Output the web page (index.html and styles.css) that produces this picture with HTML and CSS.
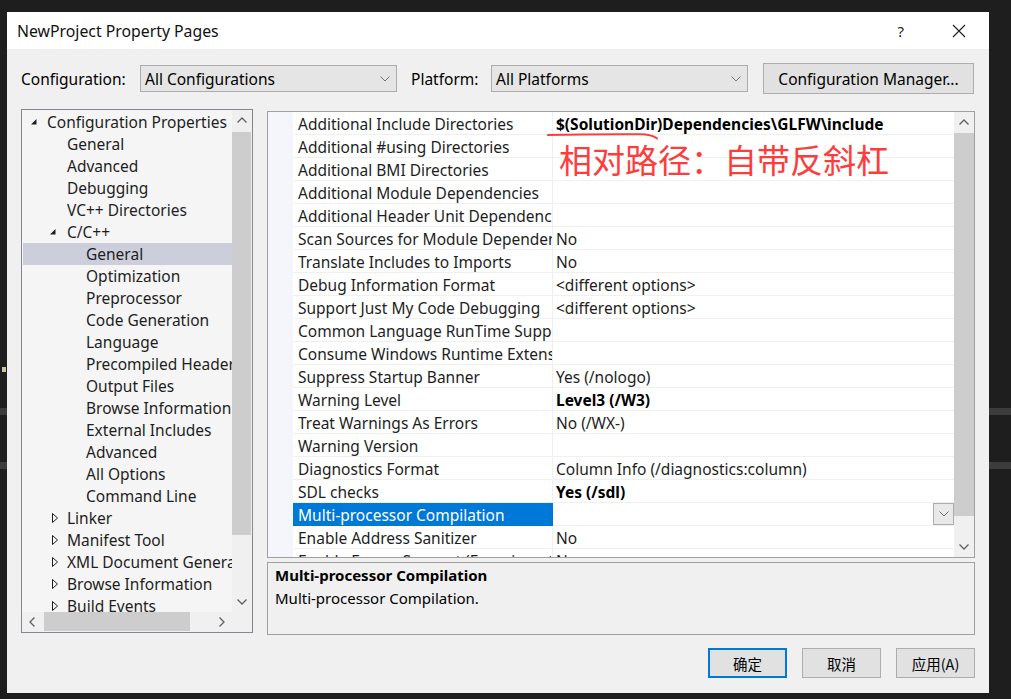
FILE: index.html
```html
<!DOCTYPE html>
<html>
<head>
<meta charset="utf-8">
<link rel="stylesheet" href="styles.css">
</head>
<body>
<div class="desk-bar bar-a"></div>
<div class="desk-bar bar-b"></div>
<div class="desk-dot"></div>

<div class="dialog">
  <div class="titlebar">
    <span class="title">NewProject Property Pages</span>
    <span class="help">?</span>
    <svg class="close" width="14" height="14" viewBox="0 0 14 14"><path d="M1 1 L13 13 M13 1 L1 13" stroke="#1e1e1e" stroke-width="1.1" fill="none"/></svg>
  </div>

  <div class="dlg-body">
    <div class="config-row">
      <span class="lbl">Configuration:</span>
      <div class="combo"><span>All Configurations</span><svg class="chev" width="10" height="6" viewBox="0 0 10 6"><path d="M0.5 0.5 L5 5 L9.5 0.5" stroke="#707070" fill="none"/></svg></div>
      <span class="lbl plat">Platform:</span>
      <div class="combo"><span>All Platforms</span><svg class="chev" width="10" height="6" viewBox="0 0 10 6"><path d="M0.5 0.5 L5 5 L9.5 0.5" stroke="#707070" fill="none"/></svg></div>
      <span class="spacer"></span>
      <div class="btn cfg-btn">Configuration Manager...</div>
    </div>

    <div class="main">
      <div class="tree-box">
        <div class="tree-content">
          <div class="t-row lv0"><svg class="tw-exp" width="6" height="6" viewBox="0 0 6 6"><polygon points="5.5,0 5.5,5.5 0,5.5" fill="#1e1e1e"/></svg><span>Configuration Properties</span></div>
          <div class="t-row lv1">General</div>
          <div class="t-row lv1">Advanced</div>
          <div class="t-row lv1">Debugging</div>
          <div class="t-row lv1">VC++ Directories</div>
          <div class="t-row lv1x"><svg class="tw-exp2" width="6" height="6" viewBox="0 0 6 6"><polygon points="5.5,0 5.5,5.5 0,5.5" fill="#1e1e1e"/></svg><span>C/C++</span></div>
          <div class="t-row lv2 sel">General</div>
          <div class="t-row lv2">Optimization</div>
          <div class="t-row lv2">Preprocessor</div>
          <div class="t-row lv2">Code Generation</div>
          <div class="t-row lv2">Language</div>
          <div class="t-row lv2">Precompiled Headers</div>
          <div class="t-row lv2">Output Files</div>
          <div class="t-row lv2">Browse Information</div>
          <div class="t-row lv2">External Includes</div>
          <div class="t-row lv2">Advanced</div>
          <div class="t-row lv2">All Options</div>
          <div class="t-row lv2">Command Line</div>
          <div class="t-row lv1c"><svg class="tw-col" width="6" height="10" viewBox="0 0 6 10"><polygon points="0.5,0.5 5.5,5 0.5,9.5" fill="none" stroke="#1e1e1e"/></svg><span>Linker</span></div>
          <div class="t-row lv1c"><svg class="tw-col" width="6" height="10" viewBox="0 0 6 10"><polygon points="0.5,0.5 5.5,5 0.5,9.5" fill="none" stroke="#1e1e1e"/></svg><span>Manifest Tool</span></div>
          <div class="t-row lv1c"><svg class="tw-col" width="6" height="10" viewBox="0 0 6 10"><polygon points="0.5,0.5 5.5,5 0.5,9.5" fill="none" stroke="#1e1e1e"/></svg><span>XML Document Generator</span></div>
          <div class="t-row lv1c"><svg class="tw-col" width="6" height="10" viewBox="0 0 6 10"><polygon points="0.5,0.5 5.5,5 0.5,9.5" fill="none" stroke="#1e1e1e"/></svg><span>Browse Information</span></div>
          <div class="t-row lv1c"><svg class="tw-col" width="6" height="10" viewBox="0 0 6 10"><polygon points="0.5,0.5 5.5,5 0.5,9.5" fill="none" stroke="#1e1e1e"/></svg><span>Build Events</span></div>
        </div>
        <div class="vscroll tree-v">
          <div class="sb-arrow"><svg width="10" height="6" viewBox="0 0 10 6"><path d="M0.5 5.5 L5 1 L9.5 5.5" stroke="#606060" stroke-width="1.3" fill="none"/></svg></div>
          <div class="sb-track"><div class="thumb-v tree-thumb"></div></div>
          <div class="sb-arrow"><svg width="10" height="6" viewBox="0 0 10 6"><path d="M0.5 0.5 L5 5 L9.5 0.5" stroke="#606060" stroke-width="1.3" fill="none"/></svg></div>
        </div>
        <div class="hscroll">
          <div class="sb-arrow-h"><svg width="6" height="10" viewBox="0 0 6 10"><path d="M5.5 0.5 L1 5 L5.5 9.5" stroke="#606060" stroke-width="1.3" fill="none"/></svg></div>
          <div class="sb-track-h"><div class="thumb-h"></div></div>
          <div class="sb-arrow-h"><svg width="6" height="10" viewBox="0 0 6 10"><path d="M0.5 0.5 L5 5 L0.5 9.5" stroke="#606060" stroke-width="1.3" fill="none"/></svg></div>
        </div>
        <div class="corner"></div>
      </div>

      <div class="right-col">
        <div class="grid-box">
          <div class="grid-rows">
            <div class="g-row"><div class="gut"></div><div class="nm">Additional Include Directories</div><div class="vl b">$(SolutionDir)Dependencies\GLFW\include</div></div>
            <div class="g-row"><div class="gut"></div><div class="nm">Additional #using Directories</div><div class="vl"></div></div>
            <div class="g-row"><div class="gut"></div><div class="nm">Additional BMI Directories</div><div class="vl"></div></div>
            <div class="g-row"><div class="gut"></div><div class="nm">Additional Module Dependencies</div><div class="vl"></div></div>
            <div class="g-row"><div class="gut"></div><div class="nm">Additional Header Unit Dependencies</div><div class="vl"></div></div>
            <div class="g-row"><div class="gut"></div><div class="nm">Scan Sources for Module Dependencies</div><div class="vl">No</div></div>
            <div class="g-row"><div class="gut"></div><div class="nm">Translate Includes to Imports</div><div class="vl">No</div></div>
            <div class="g-row"><div class="gut"></div><div class="nm">Debug Information Format</div><div class="vl">&lt;different options&gt;</div></div>
            <div class="g-row"><div class="gut"></div><div class="nm">Support Just My Code Debugging</div><div class="vl">&lt;different options&gt;</div></div>
            <div class="g-row"><div class="gut"></div><div class="nm">Common Language RunTime Support</div><div class="vl"></div></div>
            <div class="g-row"><div class="gut"></div><div class="nm">Consume Windows Runtime Extension</div><div class="vl"></div></div>
            <div class="g-row"><div class="gut"></div><div class="nm">Suppress Startup Banner</div><div class="vl">Yes (/nologo)</div></div>
            <div class="g-row"><div class="gut"></div><div class="nm">Warning Level</div><div class="vl b">Level3 (/W3)</div></div>
            <div class="g-row"><div class="gut"></div><div class="nm">Treat Warnings As Errors</div><div class="vl">No (/WX-)</div></div>
            <div class="g-row"><div class="gut"></div><div class="nm">Warning Version</div><div class="vl"></div></div>
            <div class="g-row"><div class="gut"></div><div class="nm">Diagnostics Format</div><div class="vl">Column Info (/diagnostics:column)</div></div>
            <div class="g-row"><div class="gut"></div><div class="nm">SDL checks</div><div class="vl b">Yes (/sdl)</div></div>
            <div class="g-row selrow"><div class="gut"></div><div class="nm">Multi-processor Compilation</div><div class="vl"><div class="drop"><svg width="10" height="6" viewBox="0 0 10 6"><path d="M0.5 0.5 L5 5 L9.5 0.5" stroke="#707070" fill="none"/></svg></div></div></div>
            <div class="g-row"><div class="gut"></div><div class="nm">Enable Address Sanitizer</div><div class="vl">No</div></div>
            <div class="g-row"><div class="gut"></div><div class="nm">Enable Fuzzer Support (Experimental)</div><div class="vl">No</div></div>

            <svg class="scribble" width="116" height="10" viewBox="0 0 116 10"><path d="M2 4 Q40 3 94 3.2 Q106 3.4 111 7.5" stroke="#ff3c3c" stroke-width="2" fill="none" stroke-linecap="round"/></svg>
            <div class="annot">相对路径：自带反斜杠</div>
          </div>
          <div class="vscroll grid-v">
            <div class="sb-arrow"><svg width="10" height="6" viewBox="0 0 10 6"><path d="M0.5 5.5 L5 1 L9.5 5.5" stroke="#606060" stroke-width="1.3" fill="none"/></svg></div>
            <div class="sb-track"><div class="thumb-v grid-thumb"></div></div>
            <div class="sb-arrow"><svg width="10" height="6" viewBox="0 0 10 6"><path d="M0.5 0.5 L5 5 L9.5 0.5" stroke="#606060" stroke-width="1.3" fill="none"/></svg></div>
          </div>
        </div>
        <div class="desc-box">
          <div class="desc-title">Multi-processor Compilation</div>
          <div class="desc-text">Multi-processor Compilation.</div>
        </div>
      </div>
    </div>

    <div class="btn-row">
      <div class="btn dbtn default">确定</div>
      <div class="btn dbtn">取消</div>
      <div class="btn dbtn">应用(A)</div>
    </div>
  </div>
</div>
</body>
</html>
```

FILE: styles.css
```css
* { box-sizing: border-box; }

body {
  margin: 0;
  width: 1011px;
  height: 699px;
  padding: 12px 0 0 7px;
  background: #1e1e1e;
  position: relative;
  overflow: hidden;
  font-family: "Noto Sans", "Noto Sans CJK SC", sans-serif;
  font-size: 15.5px;
  color: #000;
}

.desk-bar {
  position: absolute;
  left: 0;
  width: 1011px;
  height: 7px;
  background: #3c3c3c;
}
.bar-a { top: 408px; }
.bar-b { top: 462px; }
.desk-dot {
  position: absolute;
  left: 2px;
  top: 367px;
  width: 4px;
  height: 5px;
  background: #c9c79a;
}

.dialog {
  position: relative;
  z-index: 1;
  width: 982px;
  height: 681px;
  background: #f0f0f0;
  display: flex;
  flex-direction: column;
}

.titlebar {
  height: 37px;
  background: #fff;
  display: flex;
  align-items: center;
  padding: 0 23px 0 10px;
  flex: none;
}
.title { font-size: 15.8px; flex: 1; color: #111; }
.help { font-size: 15px; margin-right: 48px; color: #222; }
.close { display: block; }

.dlg-body {
  flex: 1;
  padding: 14px 14px 0 14px;
  display: flex;
  flex-direction: column;
}

.config-row {
  height: 31px;
  display: flex;
  align-items: center;
}
.lbl { width: 119px; white-space: nowrap; }
.lbl.plat { width: 94px; padding-left: 14px; }
.combo {
  width: 257px;
  height: 27px;
  background: #e5e5e5;
  border: 1px solid #adadad;
  display: flex;
  align-items: center;
  padding: 0 6px 0 4px;
}
.combo span { flex: 1; }
.chev { display: block; }
.spacer { width: 15px; }

.btn {
  background: #e1e1e1;
  border: 1px solid #adadad;
  display: flex;
  align-items: center;
  justify-content: center;
}
.cfg-btn { width: 211px; height: 31px; }

.main {
  margin-top: 15px;
  display: flex;
  gap: 14px;
  height: 526px;
}

.tree-box {
  width: 232px;
  height: 524px;
  border: 1px solid #828790;
  display: grid;
  grid-template-columns: 210px 20px;
  grid-template-rows: 502px 20px;
  background: #f5f5f5;
}
.tree-content {
  overflow: hidden;
  padding-top: 1px;
  color: #1e1e1e;
}
.t-row {
  height: 22px;
  line-height: 22px;
  white-space: nowrap;
  display: flex;
  align-items: center;
}
.t-row svg { flex: none; display: block; }
.lv0 { padding-left: 9px; }
.lv0 .tw-exp { margin-right: 10px; }
.lv1 { padding-left: 45px; }
.lv1x { padding-left: 28px; }
.lv1x .tw-exp2 { margin-right: 11px; }
.lv1c { padding-left: 30px; }
.lv1c .tw-col { margin-right: 9px; }
.lv2 { padding-left: 64px; }
.t-row.sel { background: #cccedb; margin-left: 1px; padding-left: 63px; }

.vscroll {
  background: #f0f0f0;
  display: flex;
  flex-direction: column;
}
.sb-arrow {
  height: 20px;
  flex: none;
  display: flex;
  align-items: center;
  justify-content: center;
}
.sb-arrow svg { display: block; }
.sb-track { flex: 1; }
.thumb-v { width: 19px; background: #cdcdcd; }
.tree-thumb { margin-top: 2px; height: 403px; }

.hscroll {
  background: #f0f0f0;
  display: flex;
}
.sb-arrow-h {
  width: 20px;
  flex: none;
  display: flex;
  align-items: center;
  justify-content: center;
}
.sb-track-h { flex: 1; }
.thumb-h { margin-left: 2px; width: 146px; height: 19px; background: #cdcdcd; }
.corner { background: #f0f0f0; }

.right-col {
  width: 708px;
  padding-top: 2px;
  display: flex;
  flex-direction: column;
  gap: 4px;
}

.grid-box {
  height: 447px;
  border: 1px solid #a0a0a0;
  background: #fff;
  display: flex;
}
.grid-rows {
  flex: 1;
  position: relative;
  overflow: hidden;
}
.g-row {
  display: grid;
  grid-template-columns: 25px 260px 1fr;
  height: 23px;
}
.gut { background: #f4f6fb; }
.nm {
  border-right: 1px solid #f0f0f0;
  border-bottom: 1px solid #f0f0f0;
  padding-left: 5px;
  line-height: 24px;
  white-space: nowrap;
  overflow: hidden;
  color: #1e1e1e;
}
.vl {
  border-bottom: 1px solid #f0f0f0;
  padding-left: 3px;
  line-height: 24px;
  white-space: nowrap;
  overflow: hidden;
  display: flex;
  justify-content: space-between;
  color: #1e1e1e;
}
.vl.b { font-weight: 700; color: #000; }
.selrow .nm { background: #0078d7; color: #fff; border-color: #0078d7; }
.drop {
  margin-left: auto;
  width: 21px;
  height: 22px;
  border: 1px solid #adadad;
  background: #e9e9e9;
  display: flex;
  align-items: center;
  justify-content: center;
}
.grid-v { width: 20px; flex: none; }
.grid-thumb { margin-top: 1px; height: 383px; width: 20px; }

.annot {
  position: absolute;
  left: 291px;
  top: 30px;
  font-family: "Noto Sans CJK SC", sans-serif;
  font-size: 33px;
  line-height: 35px;
  color: #ff3c3c;
  white-space: nowrap;
}
.scribble {
  position: absolute;
  left: 278px;
  top: 19px;
  display: block;
}

.desc-box {
  height: 73px;
  border: 1px solid #a0a0a0;
  background: #f0f0f0;
  padding: 1px 7px;
}
.desc-title { font-weight: 700; line-height: 23px; font-size: 15px; }
.desc-text { line-height: 23px; font-size: 15px; }

.btn-row {
  margin-top: 13px;
  display: flex;
  justify-content: flex-end;
  gap: 15px;
}
.dbtn {
  width: 79px;
  height: 30px;
  font-family: "Noto Sans CJK SC", sans-serif;
  font-size: 14.5px;
}
.dbtn.default { border: 2px solid #0078d7; }
```
